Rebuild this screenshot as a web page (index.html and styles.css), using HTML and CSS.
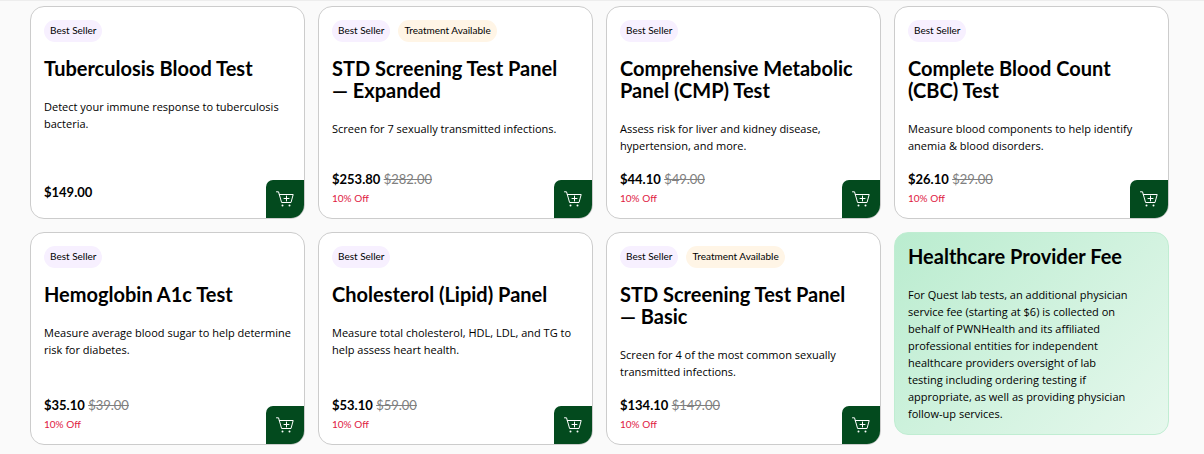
FILE: index.html
```html
<!DOCTYPE html>
<html lang="en">
<head>
<meta charset="utf-8">
<title>Lab Tests</title>
<link rel="stylesheet" href="styles.css">
</head>
<body>
<svg class="sprite" aria-hidden="true">
  <symbol id="cart" viewBox="0 0 18 16">
    <g fill="none" stroke="currentColor" stroke-linecap="round" stroke-linejoin="round">
      <path d="M.5 .8H2.500L5.600 11.500H15L17.200 3.500H3.300M8 7.500H13M10.500 5V10"/>
    </g>
    <circle cx="6.500" cy="14.500" r="1" fill="currentColor"/>
    <circle cx="13.500" cy="14.500" r="1" fill="currentColor"/>
  </symbol>
</svg>
<main class="products">
  <article class="card">
    <div class="tags"><span class="tag">Best Seller</span></div>
    <h2 class="title">Tuberculosis Blood Test</h2>
    <p class="text">Detect your immune response to tuberculosis bacteria.</p>
    <div class="price">
      <p class="amounts"><strong class="now">$149.00</strong></p>
    </div>
    <button class="add" type="button" aria-label="Add to cart"><svg class="icon"><use href="#cart"/></svg></button>
  </article>
  <article class="card">
    <div class="tags"><span class="tag">Best Seller</span><span class="tag tag-treatment">Treatment Available</span></div>
    <h2 class="title">STD Screening Test Panel — Expanded</h2>
    <p class="text">Screen for 7 sexually transmitted infections.</p>
    <div class="price">
      <p class="amounts"><strong class="now">$253.80</strong> <s class="was">$282.00</s></p>
      <p class="off">10% Off</p>
    </div>
    <button class="add" type="button" aria-label="Add to cart"><svg class="icon"><use href="#cart"/></svg></button>
  </article>
  <article class="card">
    <div class="tags"><span class="tag">Best Seller</span></div>
    <h2 class="title">Comprehensive Metabolic Panel (CMP) Test</h2>
    <p class="text">Assess risk for liver and kidney disease, hypertension, and more.</p>
    <div class="price">
      <p class="amounts"><strong class="now">$44.10</strong> <s class="was">$49.00</s></p>
      <p class="off">10% Off</p>
    </div>
    <button class="add" type="button" aria-label="Add to cart"><svg class="icon"><use href="#cart"/></svg></button>
  </article>
  <article class="card">
    <div class="tags"><span class="tag">Best Seller</span></div>
    <h2 class="title">Complete Blood Count (CBC) Test</h2>
    <p class="text">Measure blood components to help identify anemia &amp; blood disorders.</p>
    <div class="price">
      <p class="amounts"><strong class="now">$26.10</strong> <s class="was">$29.00</s></p>
      <p class="off">10% Off</p>
    </div>
    <button class="add" type="button" aria-label="Add to cart"><svg class="icon"><use href="#cart"/></svg></button>
  </article>
  <article class="card">
    <div class="tags"><span class="tag">Best Seller</span></div>
    <h2 class="title">Hemoglobin A1c Test</h2>
    <p class="text">Measure average blood sugar to help determine risk for diabetes.</p>
    <div class="price">
      <p class="amounts"><strong class="now">$35.10</strong> <s class="was">$39.00</s></p>
      <p class="off">10% Off</p>
    </div>
    <button class="add" type="button" aria-label="Add to cart"><svg class="icon"><use href="#cart"/></svg></button>
  </article>
  <article class="card">
    <div class="tags"><span class="tag">Best Seller</span></div>
    <h2 class="title">Cholesterol (Lipid) Panel</h2>
    <p class="text">Measure total cholesterol, HDL, LDL, and TG to help assess heart health.</p>
    <div class="price">
      <p class="amounts"><strong class="now">$53.10</strong> <s class="was">$59.00</s></p>
      <p class="off">10% Off</p>
    </div>
    <button class="add" type="button" aria-label="Add to cart"><svg class="icon"><use href="#cart"/></svg></button>
  </article>
  <article class="card">
    <div class="tags"><span class="tag">Best Seller</span><span class="tag tag-treatment">Treatment Available</span></div>
    <h2 class="title">STD Screening Test Panel — Basic</h2>
    <p class="text">Screen for 4 of the most common sexually transmitted infections.</p>
    <div class="price">
      <p class="amounts"><strong class="now">$134.10</strong> <s class="was">$149.00</s></p>
      <p class="off">10% Off</p>
    </div>
    <button class="add" type="button" aria-label="Add to cart"><svg class="icon"><use href="#cart"/></svg></button>
  </article>
  <aside class="fee">
    <h2 class="title">Healthcare Provider Fee</h2>
    <p class="text">For Quest lab tests, an additional physician service fee (starting at $6) is collected on behalf of PWNHealth and its affiliated professional entities for independent healthcare providers oversight of lab testing including ordering testing if appropriate, as well as providing physician follow-up services.</p>
  </aside>
</main>
</body>
</html>
```
FILE: styles.css
```css
* { box-sizing: border-box; }

body {
  margin: 0;
  border-top: 1px solid #ededed;
  background: #fafafa;
  color: #000;
  font-family: Lato, sans-serif;
}

h2, p { margin: 0; }

.sprite {
  position: absolute;
  width: 0;
  height: 0;
}

.products {
  display: grid;
  grid-template-columns: repeat(4, 1fr);
  grid-auto-rows: 1fr;
  gap: 13px;
  padding: 5px 35px 9px 30px;
}

.card {
  position: relative;
  display: flex;
  flex-direction: column;
  min-height: 213px;
  padding: 13px 8px 13px 13px;
  overflow: hidden;
  border: 1px solid #ccc;
  border-radius: 14px;
  background: #fff;
}

.tags {
  display: flex;
  gap: 8px;
  margin-bottom: 15px;
}

.tag {
  padding: 0 6px 1px;
  border-radius: 11px;
  background: #f7f0ff;
  font-size: 10px;
  line-height: 21px;
}

.tag-treatment { background: #fff5e6; }

.title {
  margin-bottom: 19px;
  padding-right: 16px;
  font-size: 20px;
  font-weight: 700;
  line-height: 22px;
}

.text {
  font-family: "Open Sans", sans-serif;
  font-size: 11px;
  line-height: 17px;
}

.price {
  margin-top: auto;
}

.amounts {
  font-size: 13px;
  line-height: 26px;
}

.now { font-weight: 700; }

.was { color: #808080; }

.off {
  color: #e01a3f;
  font-size: 10px;
  line-height: 13px;
}

.add {
  position: absolute;
  right: 0;
  bottom: 0;
  display: flex;
  align-items: center;
  justify-content: center;
  width: 38px;
  height: 38px;
  padding: 0;
  border: 0;
  border-radius: 7px 0 0 0;
  background: #034a1e;
  color: #fff;
  cursor: pointer;
}

.icon {
  width: 18px;
  height: 16px;
}

.fee {
  align-self: start;
  padding: 12px 36px 12px 13px;
  border: 1px solid #c0edd2;
  border-radius: 14px;
  background: linear-gradient(135deg, #baeccf, #e6f8ed);
}

.fee .title { padding-right: 0; }
```
